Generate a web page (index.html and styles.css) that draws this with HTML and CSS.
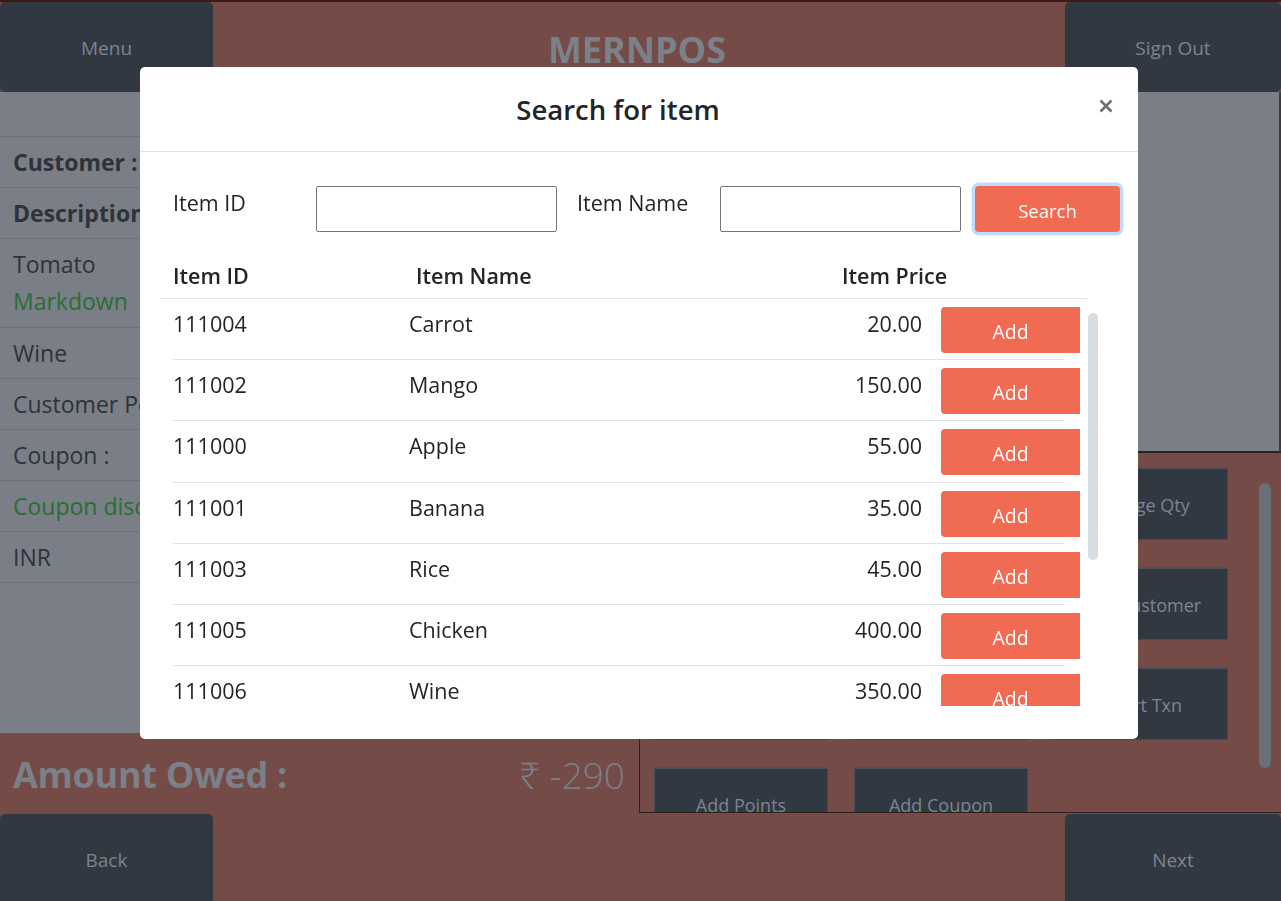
FILE: index.html
```html
<!DOCTYPE html>
<html lang="en">
<head>
<meta charset="utf-8">
<title>MERNPOS</title>
<link rel="stylesheet" href="styles.css">
</head>
<body>
<div class="app">
  <header class="topbar">
    <button class="nav-btn">Menu</button>
    <h1 class="brand">MERNPOS</h1>
    <button class="nav-btn nav-right">Sign Out</button>
  </header>

  <main class="main">
    <section class="left">
      <div class="receipt">
        <div class="r-row r-head"></div>
        <div class="r-row bold">Customer :</div>
        <div class="r-row bold">Description</div>
        <div class="r-row"><div>Tomato</div><div class="green sub">Markdown</div></div>
        <div class="r-row">Wine</div>
        <div class="r-row">Customer Points</div>
        <div class="r-row">Coupon :</div>
        <div class="r-row green">Coupon discount</div>
        <div class="r-row">INR</div>
      </div>
      <div class="owed">
        <span class="owed-label">Amount Owed :</span>
        <span class="owed-val">₹ -290</span>
      </div>
    </section>

    <section class="right">
      <div class="display"></div>
      <div class="actions">
        <div class="action-grid">
          <button class="act-btn">Void Item</button>
          <button class="act-btn">Price Override</button>
          <button class="act-btn">Change Qty</button>
          <button class="act-btn">Discount</button>
          <button class="act-btn">Markdown</button>
          <button class="act-btn">Add Customer</button>
          <button class="act-btn">Return</button>
          <button class="act-btn">Suspend Txn</button>
          <button class="act-btn">Abort Txn</button>
          <button class="act-btn">Add Points</button>
          <button class="act-btn">Add Coupon</button>
        </div>
        <div class="act-track"><div class="act-thumb"></div></div>
      </div>
    </section>
  </main>

  <footer class="bottombar">
    <button class="nav-btn foot">Back</button>
    <button class="nav-btn foot nav-right">Next</button>
  </footer>
</div>

<div class="backdrop">
  <div class="modal">
    <div class="modal-header">
      <h2 class="modal-title">Search for item</h2>
      <button class="close" aria-label="Close">
        <svg width="14" height="14" viewBox="0 0 14 14"><path d="M1.5 1.5L12.5 12.5M12.5 1.5L1.5 12.5" stroke="#6f6f6f" stroke-width="2.6" stroke-linecap="butt"/></svg>
      </button>
    </div>
    <div class="modal-body">
      <div class="search-row">
        <label class="s-label">Item ID</label>
        <input class="s-input" type="text">
        <label class="s-label">Item Name</label>
        <input class="s-input" type="text">
        <button class="s-btn">Search</button>
      </div>
      <div class="t-head">
        <span>Item ID</span>
        <span>Item Name</span>
        <span>Item Price</span>
      </div>
      <div class="t-scroll">
        <div class="t-body">
          <div class="t-row"><span>111004</span><span>Carrot</span><span class="price">20.00</span><span class="cell-btn"><button class="add-btn">Add</button></span></div>
          <div class="t-row"><span>111002</span><span>Mango</span><span class="price">150.00</span><span class="cell-btn"><button class="add-btn">Add</button></span></div>
          <div class="t-row"><span>111000</span><span>Apple</span><span class="price">55.00</span><span class="cell-btn"><button class="add-btn">Add</button></span></div>
          <div class="t-row"><span>111001</span><span>Banana</span><span class="price">35.00</span><span class="cell-btn"><button class="add-btn">Add</button></span></div>
          <div class="t-row"><span>111003</span><span>Rice</span><span class="price">45.00</span><span class="cell-btn"><button class="add-btn">Add</button></span></div>
          <div class="t-row"><span>111005</span><span>Chicken</span><span class="price">400.00</span><span class="cell-btn"><button class="add-btn">Add</button></span></div>
          <div class="t-row"><span>111006</span><span>Wine</span><span class="price">350.00</span><span class="cell-btn"><button class="add-btn">Add</button></span></div>
          <div class="t-row"><span>111007</span><span>Milk</span><span class="price">60.00</span><span class="cell-btn"><button class="add-btn">Add</button></span></div>
        </div>
        <div class="t-track"><div class="t-thumb"></div></div>
      </div>
    </div>
  </div>
</div>
</body>
</html>
```

FILE: styles.css
```css
* { box-sizing: border-box; }
html, body { margin: 0; padding: 0; }
body {
  width: 1281px;
  height: 901px;
  overflow: hidden;
  font-family: "Open Sans", "Noto Sans", sans-serif;
  background: #744b47;
}
button { font-family: inherit; cursor: pointer; }

.app {
  display: flex;
  flex-direction: column;
  height: 901px;
  border-top: 2px solid #3c1a12;
}

/* top bar */
.topbar {
  height: 90px;
  flex: none;
  display: flex;
  align-items: stretch;
  justify-content: space-between;
  background: #744b47;
}
.nav-btn {
  width: 213px;
  border: none;
  border-radius: 5px;
  background: #313842;
  color: #7b8590;
  font-size: 19px;
  padding: 2px 0 0 0;
}
.nav-right { width: 216px; }
.brand {
  margin: 0;
  align-self: center;
  font-size: 36px;
  font-weight: 700;
  color: #7b8089;
  padding: 4px 4px 0 0;
}

/* main */
.main {
  height: 721px;
  flex: none;
  display: grid;
  grid-template-columns: 639px 642px;
  grid-template-rows: 721px;
  min-height: 0;
}
.left {
  display: flex;
  flex-direction: column;
  min-height: 0;
}
.receipt {
  height: 641px;
  flex: none;
  background: #7a7e86;
  color: #2e3339;
  font-size: 23px;
}
.r-row {
  padding: 8px 13px;
  line-height: 34px;
  height: 51px;
  border-bottom: 1px solid #6c7077;
  white-space: nowrap;
  overflow: hidden;
}
.r-row:nth-child(4) { height: 89px; }
.r-head { height: 45px; padding: 0; }
.bold { font-weight: 700; }
.green { color: #2a6d35; }
.sub { margin-top: 3px; }
.owed {
  flex: 1;
  display: flex;
  align-items: center;
  justify-content: space-between;
  padding: 2px 14px 0 13px;
  color: #7b8089;
  font-size: 36px;
}
.owed-label { font-weight: 700; letter-spacing: -0.3px; }
.owed-val { font-weight: 300; font-size: 37px; }

.right {
  display: flex;
  flex-direction: column;
  min-height: 0;
}
.display {
  height: 359px;
  flex: none;
  background: #7a7e86;
  border-right: 2px solid #3a3d42;
}
.actions {
  flex: 1;
  min-height: 0;
  display: flex;
  justify-content: space-between;
  border-top: 2px solid #2d2220;
  border-left: 1px solid #2d2220;
  border-bottom: 1px solid #2d2220;
  overflow: hidden;
  padding: 14px 10px 0 14px;
}
.action-grid {
  display: grid;
  grid-template-columns: repeat(3, 174px);
  grid-auto-rows: 73px;
  column-gap: 26px;
  row-gap: 27px;
  align-content: start;
  flex: none;
}
.act-btn {
  background: #313842;
  border: 1px solid #454b52;
  border-top: 2px solid #4b5158;
  color: #7b8590;
  font-size: 18px;
  padding: 2px 0 0 0;
}
.act-track {
  width: 12px;
  padding-top: 16px;
  flex: none;
}
.act-thumb {
  height: 285px;
  background: #6a7078;
  border-radius: 6px;
}

/* footer */
.bottombar {
  height: 88px;
  flex: none;
  display: flex;
  justify-content: space-between;
  padding-top: 1px;
}
.foot { border-radius: 5px 5px 0 0; padding-top: 4px; }

/* modal */
.backdrop {
  position: fixed;
  inset: 0;
  padding: 67px 0 0 140px;
}
.modal {
  width: 998px;
  height: 672px;
  background: #fff;
  border-radius: 5px;
  color: #212529;
  display: flex;
  flex-direction: column;
}
.modal-header {
  height: 85px;
  flex: none;
  display: flex;
  align-items: center;
  border-bottom: 1px solid #dee2e6;
}
.modal-title {
  flex: 1;
  margin: 0;
  text-align: center;
  font-size: 27.5px;
  font-weight: 600;
  padding-top: 1px;
}
.close {
  width: 42px;
  height: 40px;
  border: none;
  background: none;
  padding: 0;
  margin-top: -6px;
}
.close svg { display: block; margin-left: 3px; }

.modal-body {
  padding: 33px 18px 33px 20px;
  font-size: 21.5px;
}
.search-row {
  display: grid;
  grid-template-columns: 143px 241px 20px 143px 241px 14px 145px;
  height: 46px;
  margin-left: 13px;
  margin-top: 1px;
}
.s-label { line-height: 33px; }
.s-label:nth-of-type(2) { grid-column: 4; }
.s-input {
  width: 241px;
  height: 46px;
  border: 1px solid #767676;
  border-radius: 2px;
  font-size: 20px;
}
.s-input:nth-of-type(1) { grid-column: 2; }
.s-input:nth-of-type(2) { grid-column: 5; }
.s-btn {
  grid-column: 7;
  height: 46px;
  border: none;
  border-radius: 4px;
  background: #f16b53;
  color: #fff;
  font-size: 18.5px;
  box-shadow: 0 0 0 3.5px #bfdcfb;
  padding-top: 3px;
}

.t-head {
  margin-top: 26px;
  width: 927px;
  display: grid;
  grid-template-columns: 243px 426px auto;
  padding: 1px 0 6px 13px;
  line-height: 33px;
  font-weight: 600;
  border-bottom: 1px solid #dee2e6;
}
.t-scroll {
  height: 407px;
  display: flex;
}
.t-body {
  width: 920px;
  flex: none;
  padding-left: 13px;
  overflow: hidden;
}
.t-row {
  width: 891px;
  display: grid;
  grid-template-columns: 236px 1fr auto 123px;
  align-items: start;
  padding: 8px 0 6px 0;
  line-height: 33px;
  border-bottom: 1px solid #dee2e6;
  height: 61.2px;
}
.price { padding-right: 19px; text-align: right; }
.cell-btn { height: 46px; }
.add-btn {
  width: 139px;
  height: 46px;
  border: none;
  border-radius: 4px 0 0 4px;
  background: #f16b53;
  color: #fff;
  font-size: 19.5px;
  padding-top: 4px;
}
.t-track {
  width: 10px;
  flex: none;
  margin-left: 8px;
  padding-top: 14px;
}
.t-thumb {
  height: 247px;
  background: #d6dce0;
  border-radius: 5px;
}
```
